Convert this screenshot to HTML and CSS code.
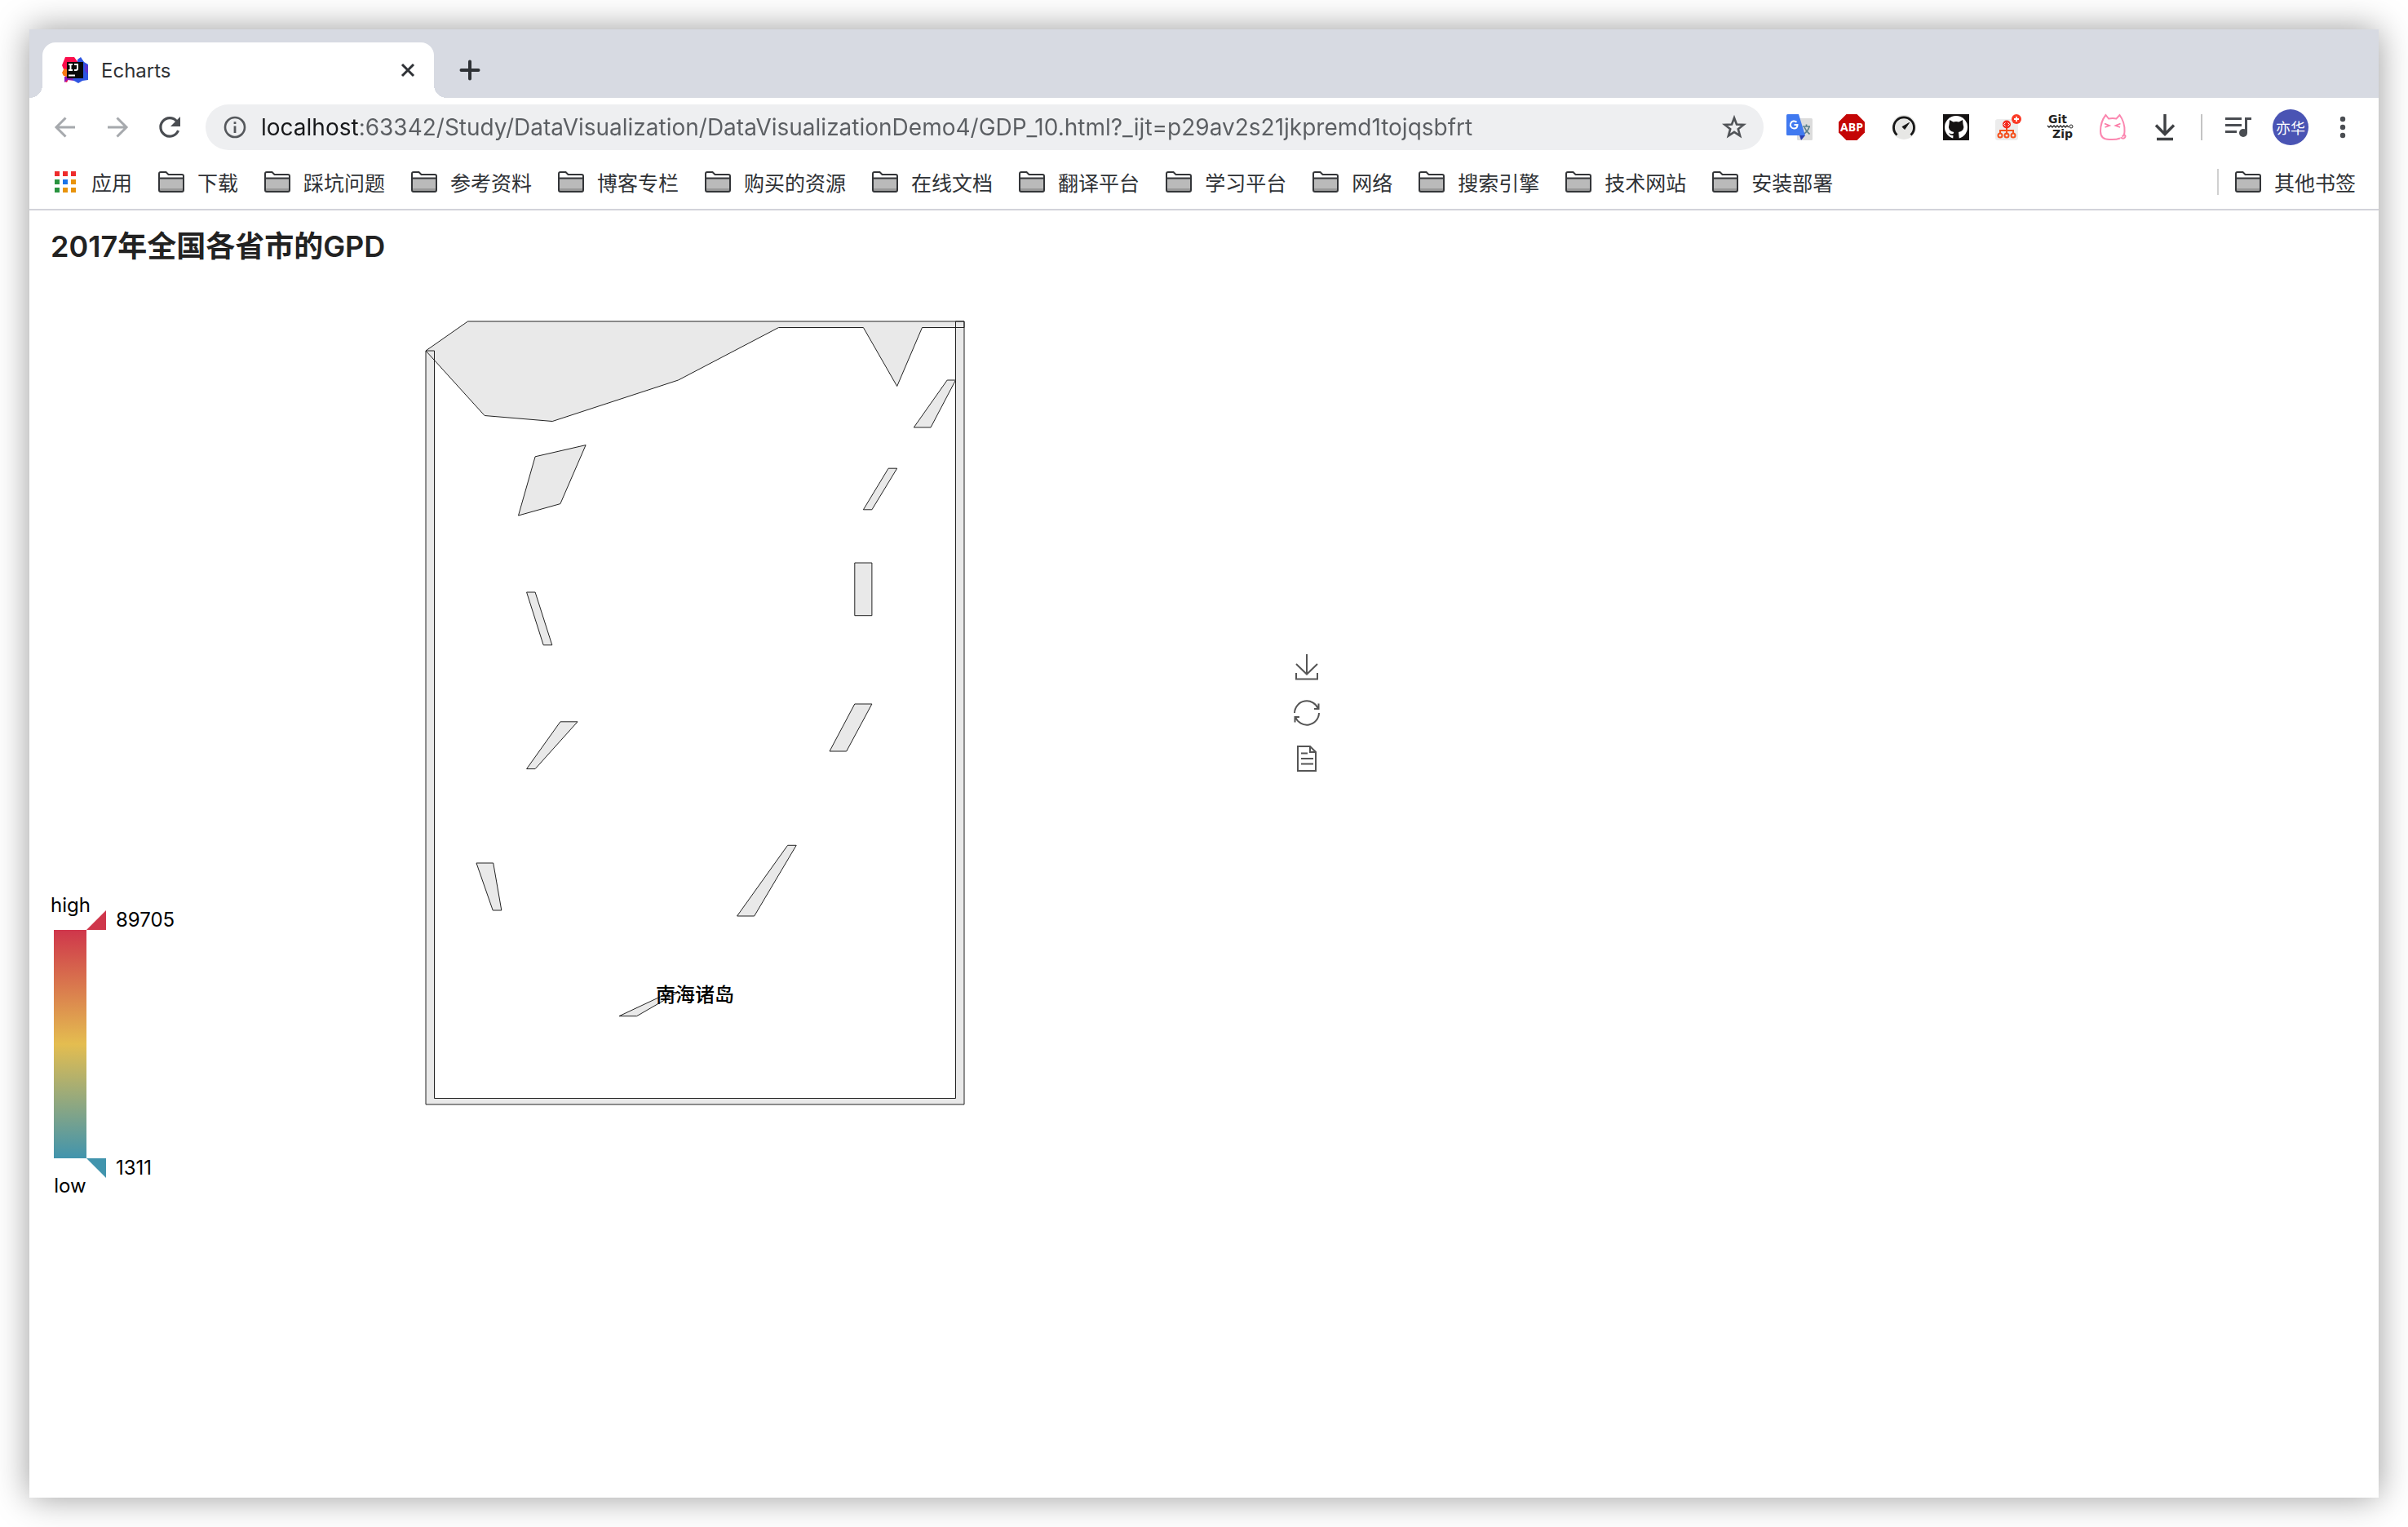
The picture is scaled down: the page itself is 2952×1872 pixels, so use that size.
FILE: index.html
```html
<!DOCTYPE html>
<html lang="zh-CN">
<head>
<meta charset="utf-8">
<title>Echarts</title>
<link rel="stylesheet" href="styles.css">
</head>
<body>
<svg class="defs" width="0" height="0" aria-hidden="true">
  <symbol id="folder" viewBox="0 0 32 26">
    <path d="M1 24V3q0-2 2-2h7l3 3h16q2 0 2 2v18z" fill="#fff"/>
    <path d="M2 9h28v14H2z" fill="#bababa"/>
    <path d="M2 21h28v3H2z" fill="#999"/>
    <path d="M1 23V3q0-2 2-2h6.500l3 3H29q2 0 2 2v17q0 2-2 2H3q-2 0-2-2zM1 8.500h30" fill="none" stroke="#333538" stroke-width="2"/>
  </symbol>
</svg>
<div class="window">
  <header>
    <div class="tabs">
      <div class="tab">
        <svg class="favicon" viewBox="0 0 32 32">
          <path d="M4 0h11l5 7-8 12-6 12-3-1 2-6-4-3 1-6-2-5z" fill="#fb0d4b"/>
          <path d="M0 19l3-5 5 2v8l-6-1z" fill="#f97a12"/>
          <path d="M3 24h10l2 5-8-1-4 3z" fill="#8b16b5"/>
          <path d="M19 3l4-3 4 6 5 3v19l-7 1-5 3-7-4 6-14z" fill="#2e55e2"/>
          <path d="M28 8l4 3v10l-4-4z" fill="#5a35cf"/>
          <path d="M6 6h20v20H6z" fill="#070707"/>
          <path d="M8 9h5M10.500 9v7M8 16h5M15 9h4v5q0 2-2 2h-2M8 22.500h8" fill="none" stroke="#fff" stroke-width="2"/>
        </svg>
        <span class="tab-name">Echarts</span>
        <button class="tab-close" aria-label="关闭"><svg viewBox="0 0 16 16"><path d="M1 1l14 14M15 1L1 15" fill="none" stroke="#2f3236" stroke-width="3"/></svg></button>
      </div>
      <button class="tab-new" aria-label="新标签页"><svg viewBox="0 0 24 24"><path d="M12 1.500v21M1.500 12h21" stroke="#2f3236" stroke-width="4" stroke-linecap="round"/></svg></button>
    </div>
    <div class="toolbar">
      <button aria-label="后退"><svg viewBox="0 0 32 32"><path d="M28 16H5M16.500 4.500L5 16l11.500 11.500" fill="none" stroke="#a6a9ad" stroke-width="3"/></svg></button>
      <button aria-label="前进"><svg viewBox="0 0 32 32"><path d="M4 16h23M15.500 4.500L27 16 15.500 27.500" fill="none" stroke="#a6a9ad" stroke-width="3"/></svg></button>
      <button aria-label="刷新"><svg viewBox="0 0 32 32"><path d="M26.500 20A11.200 11.200 0 1 1 24.500 8.500" fill="none" stroke="#4a4d52" stroke-width="3.200"/><path d="M29 3v12H17z" fill="#4a4d52"/></svg></button>
      <div class="address">
        <svg class="info" viewBox="0 0 28 28"><circle cx="14" cy="14" r="12" fill="none" stroke="#55585c" stroke-width="2.600"/><path d="M14 12.500V21M14 7.200V10" stroke="#55585c" stroke-width="2.800"/></svg>
        <input class="url" type="text" aria-label="地址" value="localhost:63342/Study/DataVisualization/DataVisualizationDemo4/GDP_10.html?_ijt=p29av2s21jkpremd1tojqsbfrt">
        <button aria-label="收藏"><svg viewBox="0 0 32 32"><path d="M16 4.500l3 8 8.500.4-6.700 5.300 2.300 8.300L16 21.800l-7.100 4.700 2.300-8.300-6.700-5.300 8.500-.4z" fill="none" stroke="#505357" stroke-width="2.600"/></svg></button>
      </div>
      <div class="extensions">
        <button aria-label="翻译"><svg viewBox="0 0 32 32"><rect x="13" y="5" width="19" height="27" rx="1.500" fill="#dcdcdc"/><path d="M20 15h9M24.500 12.500V15M28 15.500q-2 6-7 9M22 16q2 5 6.500 8.500" fill="none" stroke="#5b7f8a" stroke-width="1.700"/><path d="M16 26h7l-5 6z" fill="#2a3db0"/><path d="M1.500 0H15l8 26H1.500Q0 26 0 24.500v-23Q0 0 1.500 0z" fill="#4079f0"/><path d="M9.500 13h4q0 4.500-4.200 4.500A4.500 4.500 0 1 1 12.500 9.800" fill="none" stroke="#fff" stroke-width="2"/></svg></button>
        <button aria-label="ABP"><svg viewBox="0 0 32 32"><path d="M9.500 0h13L32 9.500v13L22.500 32h-13L0 22.500v-13z" fill="#c40606"/><text class="abp" x="16" y="21" text-anchor="middle">ABP</text></svg></button>
        <button aria-label="测速"><svg viewBox="0 0 32 32"><circle cx="16" cy="16" r="15" fill="#e7e7e5"/><path d="M7.500 25.500A12.500 12.500 0 1 1 24.500 25.500" fill="none" stroke="#171717" stroke-width="2.800"/><path d="M22.500 10.500l-5.500 8-3-3z" fill="#171717" stroke="#171717"/></svg></button>
        <button aria-label="GitHub"><svg viewBox="0 0 32 32"><path d="M0 0h32v32H0z" fill="#151313"/><circle cx="16" cy="16" r="14" fill="#fff"/><path d="M8 7l4.500 2.500q3.500-.8 7 0L24 7l.5 5q3 8-5.500 10l.8 8h-7.600l.3-4q-4 .5-5.500-3 2 1.500 5.500 1l.8-2Q5 20 7.500 12z" fill="#151313"/></svg></button>
        <button aria-label="目录树"><svg viewBox="0 0 32 32"><rect y="6" width="28" height="26" rx="3" fill="#ececec"/><g fill="none" stroke="#f4511e" stroke-width="2"><path d="M14 16v9M6 24v-4h16v4"/><circle cx="6" cy="26" r="2.500"/><circle cx="14" cy="26" r="2.500"/><circle cx="22" cy="26" r="2.500"/></g><circle cx="14" cy="12.500" r="5" fill="#f3291e"/><path d="M12.500 10.500l-2 2 2 2M15.500 10.500l2 2-2 2" fill="none" stroke="#fff"/><circle cx="26" cy="6" r="6" fill="#fb3a26"/><path d="M26 3v6M23 6h6" stroke="#fff" stroke-width="2"/></svg></button>
        <button aria-label="GitZip"><svg viewBox="0 0 32 32"><text class="gitzip" x="1" y="11">Git</text><text class="gitzip" x="6" y="29">Zip</text><path d="M0 14l2 2 2-2 2 2 2-2 2 2 2-2 2 2 2-2 2 2 2-2 2 2 2-2 2 2" fill="none" stroke="#222" stroke-width="1.300"/><circle cx="29" cy="15" r="2" fill="none" stroke="#222"/></svg></button>
        <button aria-label="猫"><svg viewBox="0 0 32 32"><path d="M25 29.500Q20 31.500 12 31 1 31 1 21 1 9 7.500 1L11 5.500q5-1 9.500 0L24.500 1Q31 10 30.500 21q0 5-3 6.500M25.500 28.500q4 2.500 5.500 0t-1-3" fill="none" stroke="#fb87b0" stroke-width="2"/><path d="M6 11.500l6 2.500-5.500 2M25.500 11.500l-6 2.500 5.500 2" fill="none" stroke="#fb7aa6" stroke-width="1.700"/></svg></button>
        <button aria-label="下载"><svg viewBox="0 0 32 32"><path d="M16 0v24M5 13.500L16 24.500 27 13.500M6 30.500h20" fill="none" stroke="#3f4144" stroke-width="3.400"/></svg></button>
      </div>
      <span class="rule"></span>
      <div class="account">
        <button aria-label="媒体控制"><svg viewBox="0 0 32 32"><path d="M0 5.500h20M0 13.500h20M0 21.500h14M32 5.500h-6.500V23" fill="none" stroke="#4a4d52" stroke-width="3"/><circle cx="22" cy="23" r="5" fill="#4a4d52"/></svg></button>
        <button class="avatar">亦华</button>
        <button class="more" aria-label="更多"><svg viewBox="0 0 32 32"><g fill="#4a4d52"><circle cx="16" cy="6" r="3.200"/><circle cx="16" cy="16" r="3.200"/><circle cx="16" cy="26" r="3.200"/></g></svg></button>
      </div>
    </div>
    <nav class="bookmarks">
      <a href="#"><svg viewBox="0 0 32 26"><path d="M3 0h6v6H3zM13 0h6v6h-6zM23 0h6v6h-6z" fill="#ee2c2c"/><path d="M3 10h6v6H3zM3 20h6v6H3z" fill="#29933f"/><path d="M13 10h6v6h-6z" fill="#1a73e8"/><path d="M23 10h6v6h-6zM13 20h6v6h-6zM23 20h6v6h-6z" fill="#e8930c"/></svg>应用</a>
      <a href="#"><svg><use href="#folder"/></svg>下载</a>
      <a href="#"><svg><use href="#folder"/></svg>踩坑问题</a>
      <a href="#"><svg><use href="#folder"/></svg>参考资料</a>
      <a href="#"><svg><use href="#folder"/></svg>博客专栏</a>
      <a href="#"><svg><use href="#folder"/></svg>购买的资源</a>
      <a href="#"><svg><use href="#folder"/></svg>在线文档</a>
      <a href="#"><svg><use href="#folder"/></svg>翻译平台</a>
      <a href="#"><svg><use href="#folder"/></svg>学习平台</a>
      <a href="#"><svg><use href="#folder"/></svg>网络</a>
      <a href="#"><svg><use href="#folder"/></svg>搜索引擎</a>
      <a href="#"><svg><use href="#folder"/></svg>技术网站</a>
      <a href="#"><svg><use href="#folder"/></svg>安装部署</a>
      <a href="#" class="other"><svg><use href="#folder"/></svg>其他书签</a>
    </nav>
  </header>
  <main class="chart">
    <div class="side">
      <h1>2017年全国各省市的GPD</h1>
      <div class="scale">
        <span class="scale-end">high</span>
        <div class="scale-body">
          <div class="scale-bar"></div>
          <div class="handle handle-high"><span>89705</span></div>
          <div class="handle handle-low"><span>1311</span></div>
        </div>
        <span class="scale-end">low</span>
      </div>
    </div>
    <svg class="map" viewBox="522 394 660 960">
      <g class="region">
        <path d="M522 430L573.500 394H1182V401.500H1130.500L1099.700 473.500 1058.400 401.500H954.600L831.500 466 677.200 516.500 594.100 509.500zM522 430H532.500V1346.500H1171.500V394H1182V1354H522z"/>
        <path d="M1161.200 466H1171.500L1141 524H1120.300z"/>
        <path d="M656.100 559.800L718.100 545.600 686.900 617.600 635.500 632z"/>
        <path d="M1089.100 574.200H1099.700L1068.900 624.800H1058.400z"/>
        <path d="M1047.800 690H1068.900V754.700H1047.800z"/>
        <path d="M645.600 726H656.100L676.800 790.800H666.200z"/>
        <path d="M686.900 884.800H708L656.100 942.600H645.600z"/>
        <path d="M1047.800 863H1068.900L1037.700 921H1017z"/>
        <path d="M584 1058H604.700L614.800 1116H604.200z"/>
        <path d="M965.600 1036.300H976.200L924.700 1123H903.600z"/>
        <path d="M759 1245.700H780.600L831 1216.500H821z"/>
      </g>
      <text class="map-label" x="852" y="1228" text-anchor="middle">南海诸岛</text>
    </svg>
    <div class="toolbox">
      <button aria-label="保存为图片"><svg viewBox="0 0 32 32"><path d="M16 0v24M3 12L16 24.500 29 12M3 23v7.500h26V23"/></svg></button>
      <button aria-label="还原"><svg viewBox="0 0 32 32"><path d="M1 16A15 15 0 0 1 30 11M31 16A15 15 0 0 1 2 21M30.500 4.500V11H25M1.500 27.500V21H7"/></svg></button>
      <button aria-label="数据视图"><svg viewBox="0 0 32 32"><path d="M5 1H20L27 8V31H5zM20 1V8H27M9 9.500h8M9 16h15M9 22.500h15"/></svg></button>
    </div>
  </main>
</div>
</body>
</html>
```
FILE: styles.css
```css
* { box-sizing: border-box; }

body {
  margin: 0;
  padding: 36px;
  background: #fff;
  color: #2f3236;
  font-family: Inter, "Noto Sans CJK SC", sans-serif;
  font-size: 24px;
}

.defs { position: absolute; }

button {
  flex: none;
  display: block;
  width: 32px;
  height: 32px;
  padding: 0;
  border: 0;
  background: none;
}

svg { display: block; }
button svg { width: 100%; height: 100%; overflow: visible; }

.window {
  min-height: calc(100vh - 72px);
  background: #fff;
  box-shadow: 0 0 40px rgba(0, 0, 0, .4);
}

.tabs {
  display: flex;
  align-items: center;
  gap: 32px;
  height: 84px;
  padding: 16px 16px 0;
  background: #d7dae2;
}

.tab {
  position: relative;
  display: flex;
  align-items: center;
  width: 480px;
  height: 68px;
  padding: 0 24px;
  border-radius: 16px 16px 0 0;
  background: #fff;
}

.tab::before,
.tab::after {
  content: "";
  position: absolute;
  bottom: 0;
  width: 16px;
  height: 16px;
}

.tab::before {
  right: 100%;
  background: radial-gradient(circle at 0 0, #d7dae2 16px, #fff 16px);
}

.tab::after {
  left: 100%;
  background: radial-gradient(circle at 100% 0, #d7dae2 16px, #fff 16px);
}

.favicon { width: 32px; height: 32px; }
.tab-name { flex: 1; margin-left: 16px; }
.tab-close { width: 16px; height: 16px; }
.tab-new { width: 24px; height: 24px; }

.toolbar {
  display: flex;
  align-items: center;
  gap: 32px;
  height: 72px;
  padding: 0 28px;
}

.address {
  flex: 1;
  display: flex;
  align-items: center;
  gap: 18px;
  height: 56px;
  margin: 0 -4px;
  padding: 0 20px 0 22px;
  border-radius: 28px;
  background: #eeeff1;
}

.info { flex: none; width: 28px; height: 28px; }

.url {
  flex: 1;
  min-width: 0;
  height: 48px;
  padding: 0;
  border: 0;
  outline: 0;
  background: linear-gradient(90deg, #17181a 121px, #5b5e62 121px);
  -webkit-background-clip: text;
  background-clip: text;
  color: transparent;
  font: 28px Inter, sans-serif;
}

.extensions { display: flex; gap: 32px; }

.abp {
  fill: #fff;
  font: bold 14px "Open Sans", sans-serif;
}

.gitzip {
  fill: #222;
  font: bold 14px "DejaVu Sans", sans-serif;
}

.rule {
  width: 2px;
  height: 32px;
  margin: 0 -4px;
  background: #c4c4c4;
}

.account {
  display: flex;
  align-items: center;
  gap: 26px;
}

.avatar {
  width: 44px;
  height: 44px;
  border-radius: 50%;
  background: #4a54b4;
  color: #fff;
  font: 18px "Noto Sans CJK SC", sans-serif;
}

.bookmarks {
  display: flex;
  align-items: center;
  gap: 32px;
  height: 66px;
  padding: 0 28px 2px;
  border-bottom: 2px solid #d2d3da;
}

.bookmarks a {
  display: flex;
  align-items: center;
  gap: 16px;
  color: #2f3236;
  font: 25px/32px "Noto Sans CJK SC", sans-serif;
  text-decoration: none;
  white-space: nowrap;
}

.bookmarks svg { width: 32px; height: 26px; }

.bookmarks .other {
  margin-left: auto;
  padding-left: 20px;
  border-left: 2px solid #d0d0d0;
}

.chart {
  display: grid;
  grid-template-columns: 460px 660px auto;
  justify-content: start;
  align-items: center;
  padding: 20px 26px;
}

.side {
  align-self: stretch;
  display: flex;
  flex-direction: column;
  justify-content: space-between;
  align-items: flex-start;
}

h1 {
  margin: 0;
  color: #222;
  font-size: 36px;
  line-height: 48px;
  font-weight: 600;
  white-space: nowrap;
}

.scale {
  color: #000;
  line-height: 32px;
}

.scale-end {
  display: block;
  width: 48px;
  text-align: center;
}

.scale-body {
  display: grid;
  grid-template-columns: 40px auto;
  justify-content: start;
  height: 280px;
  margin: 14px 4px 18px;
}

.scale-bar {
  grid-row: 1 / 3;
  background: linear-gradient(#cf364b, #e4bd50, #4194ad);
}

.handle {
  display: flex;
  align-items: center;
  gap: 12px;
  height: 24px;
}

.handle::before {
  content: "";
  width: 24px;
  height: 24px;
}

.handle-high { margin-top: -24px; }
.handle-high::before { background: #cf364b; clip-path: polygon(100% 0, 100% 100%, 0 100%); }
.handle-low { align-self: end; margin-bottom: -24px; }
.handle-low::before { background: #4194ad; clip-path: polygon(0 0, 100% 0, 100% 100%); }

.map {
  width: 660px;
  height: 960px;
  margin: 116px 0;
  overflow: visible;
}

.region path {
  fill: #e9e9e9;
  stroke: #222;
  stroke-width: 1;
}

.map-label {
  fill: #000;
  font: 500 24px "Noto Sans CJK SC", sans-serif;
}

.toolbox {
  display: grid;
  gap: 24px;
  margin-left: 404px;
}

.toolbox svg {
  fill: none;
  stroke: #555;
  stroke-width: 2;
}
```
